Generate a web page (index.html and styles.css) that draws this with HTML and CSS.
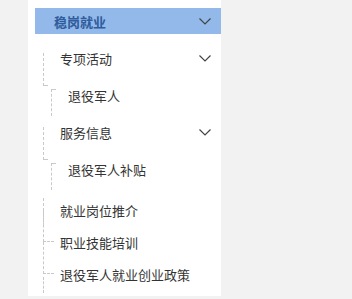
FILE: index.html
```html
<!DOCTYPE html>
<html lang="zh-CN">
<head>
  <meta charset="UTF-8" />
  <title>稳岗就业</title>
  <link rel="stylesheet" href="styles.css">
</head>
<body>
  <nav class="panel">
    <div class="head">
      <span>稳岗就业</span>
      <svg class="arrow" width="12" height="7" viewBox="0 0 12 7"><polyline points="0.5,0.5 6,6 11.5,0.5" /></svg>
    </div>

    <ul class="menu">
      <li class="group">
        <div class="row parent">
          <span>专项活动</span>
          <svg class="arrow" width="12" height="7" viewBox="0 0 12 7"><polyline points="0.5,0.5 6,6 11.5,0.5" /></svg>
        </div>
        <div class="row child">退役军人</div>
      </li>
      <li class="group">
        <div class="row parent">
          <span>服务信息</span>
          <svg class="arrow" width="12" height="7" viewBox="0 0 12 7"><polyline points="0.5,0.5 6,6 11.5,0.5" /></svg>
        </div>
        <div class="row child">退役军人补贴</div>
      </li>
    </ul>

    <ul class="leaves">
      <li class="row leaf">就业岗位推介</li>
      <li class="row leaf">职业技能培训</li>
      <li class="row leaf">退役军人就业创业政策</li>
    </ul>
  </nav>
</body>
</html>
```

FILE: styles.css
```css
:root {
  --page-bg: #f2f2f2;
  --panel-bg: #fff;
  --head-bg: #92b9e9;
  --head-text: #2f5c9c;
  --text: #333;
  --line: #c9c9c9;
  --font: "Noto Sans CJK SC", "Noto Sans", sans-serif;
}

body {
  margin: 0;
  background: var(--page-bg);
  font-family: var(--font);
  font-size: 13px;
  color: var(--text);
  display: flex;
}

.panel {
  margin-left: 28px;
  width: 193px;
  height: 296px;
  background: var(--panel-bg);
  padding-top: 8px;
  box-sizing: border-box;
}

.head {
  margin-left: 7px;
  height: 26px;
  background: var(--head-bg);
  color: var(--head-text);
  font-weight: bold;
  display: flex;
  align-items: center;
  justify-content: space-between;
  padding: 0 10px 0 19px;
}

.arrow {
  display: block;
}

.arrow polyline {
  fill: none;
  stroke: #444;
  stroke-width: 1.2;
}

.menu,
.leaves {
  list-style: none;
  margin: 0;
  padding: 0;
}

.menu {
  margin-top: 6px;
}

.row {
  position: relative;
  display: flex;
  align-items: center;
}

.parent {
  height: 36px;
  padding: 0 10px 0 32px;
  justify-content: space-between;
}

.child {
  height: 38px;
  padding-left: 40px;
}

.leaves {
  margin-top: 6px;
}

.leaf {
  height: 32px;
  padding-left: 32px;
}

/* dashed tree connectors */
.parent::before {
  content: "";
  position: absolute;
  left: 15px;
  top: 13px;
  width: 4px;
  height: 32px;
  border-left: 1px dashed var(--line);
  border-bottom: 1px dashed var(--line);
}

.child::before {
  content: "";
  position: absolute;
  left: 23px;
  top: 13px;
  width: 4px;
  height: 26px;
  border-left: 1px dashed var(--line);
  border-top: 1px dashed var(--line);
}

.leaf::before {
  content: "";
  position: absolute;
  left: 15px;
  top: -16px;
  width: 10px;
  height: 31px;
  border-left: 1px dashed var(--line);
  border-bottom: 1px dashed var(--line);
}

.leaf:first-child::before {
  top: 4px;
  height: 28px;
  border-bottom: none;
}

.leaf:last-child::after {
  content: "";
  position: absolute;
  left: 15px;
  top: 19px;
  height: 16px;
  border-left: 1px dashed var(--line);
}
```
